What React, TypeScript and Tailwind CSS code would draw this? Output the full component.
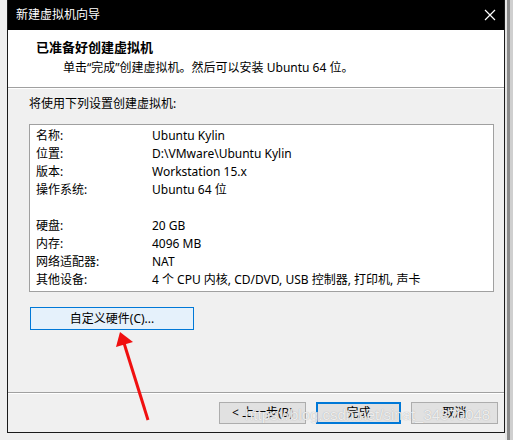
import React from 'react'

const rowsTop = [
  ['名称:', 'Ubuntu Kylin'],
  ['位置:', 'D:\\VMware\\Ubuntu Kylin'],
  ['版本:', 'Workstation 15.x'],
  ['操作系统:', 'Ubuntu 64 位'],
]

const rowsBottom = [
  ['硬盘:', '20 GB'],
  ['内存:', '4096 MB'],
  ['网络适配器:', 'NAT'],
  ['其他设备:', '4 个 CPU 内核, CD/DVD, USB 控制器, 打印机, 声卡'],
]

function Row({ label, value }: { label: string; value: string }) {
  return (
    <div className="flex h-[18px] items-center">
      <span className="w-[116px] shrink-0">{label}</span>
      <span>{value}</span>
    </div>
  )
}

export default function App() {
  return (
    <div className="relative flex w-[513px] h-[440px] bg-[#efefef] overflow-hidden font-['Noto_Sans','Noto_Sans_CJK_SC',sans-serif] text-[12px] text-black">
      {/* left margin */}
      <div className="w-[7px] shrink-0" />

      {/* dialog window */}
      <div className="flex flex-col w-[498px] h-[433px] border-l border-r border-b border-[#1a1a1a] bg-[#f0f0f0]">
        {/* title bar */}
        <div className="flex items-center justify-between h-[30px] bg-black text-white pl-[8px] pr-[8px]">
          <span className="text-[12px] leading-none">新建虚拟机向导</span>
          <svg width="12" height="12" viewBox="0 0 12 12">
            <path d="M1 1 L11 11 M11 1 L1 11" stroke="#fff" strokeWidth="1.2" />
          </svg>
        </div>

        {/* header */}
        <div className="h-[58px] bg-white border-b border-[#a0a0a0] pl-[28px] pt-[8px]">
          <div className="text-[13px] font-bold leading-[18px] font-['Noto_Sans_CJK_SC',sans-serif]">已准备好创建虚拟机</div>
          <div className="pl-[27px] mt-[3px] leading-[18px]">单击“完成”创建虚拟机。然后可以安装 Ubuntu 64 位。</div>
        </div>
        <div className="h-px bg-white" />

        {/* body */}
        <div className="flex flex-col pl-[21px] pr-[10px]">
          <div className="mt-[6px] leading-[18px]">将使用下列设置创建虚拟机:</div>
          <div className="mt-[11px] w-[465px] h-[168px] border border-[#a0a0a0] bg-white pl-[6px] pt-[2px]">
            {rowsTop.map(([l, v]) => (
              <Row key={l} label={l} value={v} />
            ))}
            <div className="h-[18px]" />
            {rowsBottom.map(([l, v]) => (
              <Row key={l} label={l} value={v} />
            ))}
          </div>
          <button className="mt-[15px] ml-[1px] w-[164px] h-[23px] border border-[#0078d7] bg-[#e5f1fb] flex items-center justify-center leading-none">
            自定义硬件(C)...
          </button>
        </div>

        {/* footer */}
        <div className="mt-[62px] border-t border-[#a0a0a0]" />
        <div className="h-px bg-white" />
        <div className="flex justify-end gap-[10px] pr-[6px] mt-[8px]">
          <button className="w-[87px] h-[22px] border border-[#adadad] bg-[#e1e1e1] flex items-center justify-center leading-none">
            &lt; 上一步(B)
          </button>
          <button className="w-[85px] h-[22px] border-2 border-[#0078d7] bg-[#e1e1e1] flex items-center justify-center leading-none">
            完成
          </button>
          <button className="w-[87px] h-[22px] border border-[#adadad] bg-[#e1e1e1] flex items-center justify-center leading-none">
            取消
          </button>
        </div>
      </div>

      {/* right background strip */}
      <div className="flex shrink-0 w-[8px] h-full bg-[#d9d9d9]">
        <div className="w-[2px] bg-[#e6e6e6]" />
        <div className="w-[3px] bg-[#8a8a8a]" />
        <div className="w-[3px] bg-[#cfcfcf]" />
      </div>

      {/* red arrow annotation */}
      <svg className="absolute left-0 top-0 pointer-events-none" width="513" height="440">
        <line x1="148" y1="420" x2="124" y2="343" stroke="#f01010" strokeWidth="3" />
        <polygon points="120,332 116,347 133,342" fill="#f01010" />
      </svg>

      {/* watermark */}
      <div className="absolute left-[245px] top-[404px] text-[15px] font-['Liberation_Sans',sans-serif] text-white/80 [text-shadow:0_0_1px_#9a9a9a] pointer-events-none whitespace-nowrap">
        https://blog.csdn.net/sinat_34370048
      </div>
    </div>
  )
}
